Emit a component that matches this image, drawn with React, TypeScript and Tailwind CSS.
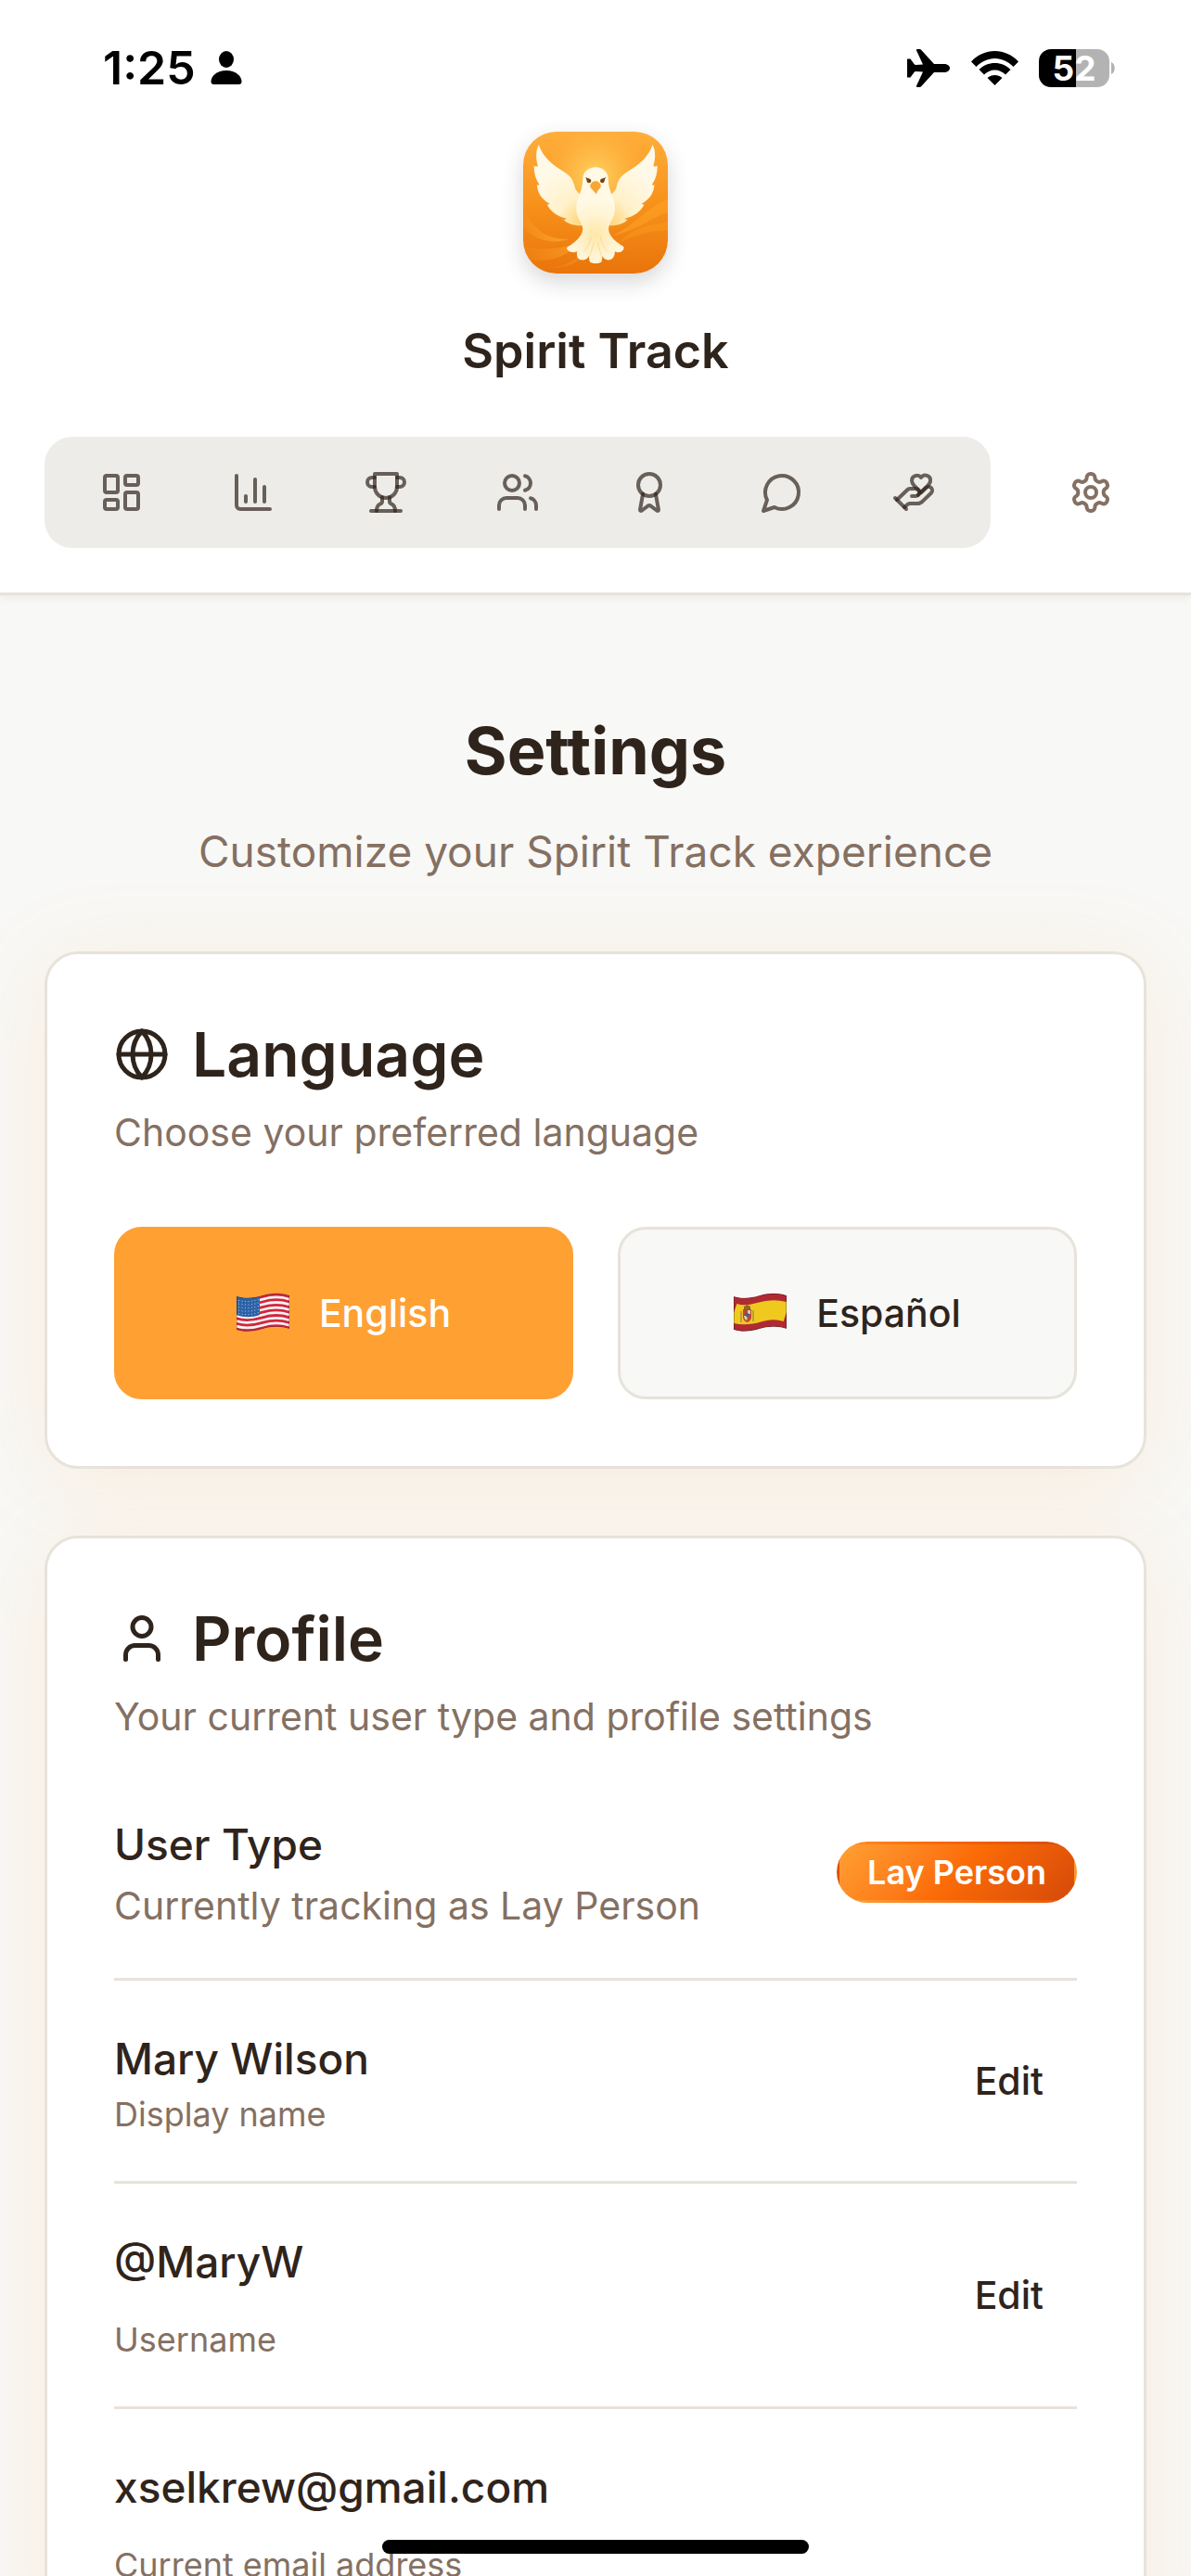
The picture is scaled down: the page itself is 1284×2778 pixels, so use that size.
import { useState } from "react";
import type { ReactNode } from "react";
import { Globe, LayoutDashboard, User } from "lucide-react";
import clsx from "clsx";

type Language = "en" | "es";

const StrokeIcon = ({ children }: { children: ReactNode }) => (
  <svg
    viewBox="0 0 24 24"
    fill="none"
    stroke="currentColor"
    strokeWidth={2}
    strokeLinecap="round"
    strokeLinejoin="round"
    className="size-12"
    aria-hidden="true"
  >
    {children}
  </svg>
);

const navItems: { label: string; icon: ReactNode }[] = [
  { label: "Dashboard", icon: <LayoutDashboard className="size-12" /> },
  {
    label: "Statistics",
    icon: (
      <StrokeIcon>
        <path d="M3 3v16a2 2 0 0 0 2 2h16" />
        <path d="M18 17V9" />
        <path d="M13 17V5" />
        <path d="M8 17v-3" />
      </StrokeIcon>
    ),
  },
  {
    label: "Goals",
    icon: (
      <StrokeIcon>
        <path d="M6 9H4.5a2.5 2.5 0 0 1 0-5H6" />
        <path d="M18 9h1.5a2.5 2.5 0 0 0 0-5H18" />
        <path d="M4 22h16" />
        <path d="M10 14.66V17c0 .55-.47.98-.97 1.21C7.85 18.75 7 20.24 7 22" />
        <path d="M14 14.66V17c0 .55.47.98.97 1.21C16.15 18.75 17 20.24 17 22" />
        <path d="M18 2H6v7a6 6 0 0 0 12 0V2Z" />
      </StrokeIcon>
    ),
  },
  {
    label: "Friends",
    icon: (
      <StrokeIcon>
        <path d="M16 21v-2a4 4 0 0 0-4-4H6a4 4 0 0 0-4 4v2" />
        <circle cx="9" cy="7" r="4" />
        <path d="M22 21v-2a4 4 0 0 0-3-3.87" />
        <path d="M16 3.13a4 4 0 0 1 0 7.75" />
      </StrokeIcon>
    ),
  },
  {
    label: "Achievements",
    icon: (
      <StrokeIcon>
        <path d="m15.477 12.89 1.515 8.526a.5.5 0 0 1-.81.47l-3.58-2.687a1 1 0 0 0-1.197 0l-3.586 2.686a.5.5 0 0 1-.81-.469l1.514-8.526" />
        <circle cx="12" cy="8" r="6" />
      </StrokeIcon>
    ),
  },
  {
    label: "Messages",
    icon: (
      <StrokeIcon>
        <path d="M7.9 20A9 9 0 1 0 4 16.1L2 22Z" />
      </StrokeIcon>
    ),
  },
  {
    label: "Prayer",
    icon: (
      <StrokeIcon>
        <path d="M11 14h2a2 2 0 1 0 0-4h-3c-.6 0-1.1.2-1.4.6L3 16" />
        <path d="m7 20 1.6-1.4c.3-.4.8-.6 1.4-.6h4c1.1 0 2.1-.4 2.8-1.2l4.6-4.4a2 2 0 0 0-2.75-2.91l-4.2 3.9" />
        <path d="m2 15 6 6" />
        <path d="M19.5 8.5c.7-.7 1.5-1.6 1.5-2.7A2.73 2.73 0 0 0 16 4a2.78 2.78 0 0 0-5 1.8c0 1.2.8 2 1.5 2.8L16 12Z" />
      </StrokeIcon>
    ),
  },
];

const StatusBar = () => (
  <div className="flex h-[142px] items-start justify-between pt-[42px] pl-[111px] pr-[82px] text-black">
    <div className="flex h-[62px] items-center gap-4">
      <span className="text-[50px] leading-[62px] font-semibold">1:25</span>
      <svg viewBox="0 0 34 36" className="h-9 w-[34px]" aria-hidden="true">
        <ellipse cx="17" cy="9" rx="8" ry="9" />
        <path d="M17 21c10 0 16.500 6 16.500 12 0 2-1 3-3 3h-27c-2 0-3-1-3-3 0-6 6.500-12 16.500-12Z" />
      </svg>
    </div>
    <div className="flex h-[62px] items-center">
      <svg viewBox="0 0 46 41" className="h-[41px] w-[46px]" aria-hidden="true">
        <path d="M0 10.500h3.500l4 5.500q.5 1 2 1l7.500-.5L10 1.500C9.700.6 10 0 11 0h2.500q1 0 1.600.7L29 16h11c4 0 6 2.500 6 4.500S44 25 40 25H29L15.100 40.300q-.6.7-1.600.7H11c-1 0-1.300-.6-1-1.500l7-15-7.500-.5q-1.500 0-2 1L3.500 30.500H0Z" />
      </svg>
      <svg
        viewBox="0 0 51 37"
        className="ml-[23px] h-[37px] w-[51px]"
        aria-hidden="true"
      >
        <path d="M0 11.500C7 4 16 0 25.500 0S44 4 51 11.500l-5.500 5.500C40 11.500 33 8 25.500 8S11 11.500 5.500 17Z" />
        <path d="M8.500 20C13 15.500 19 13 25.500 13s12.500 2.500 17 7L37 25.500C34 22.500 30 20.500 25.500 20.500S17 22.500 14 25.500Z" />
        <path d="M17.500 29c4.500-4 11.500-4 16 0l-8 8Z" />
      </svg>
      <div className="ml-[22px] flex h-[41px] w-[76px] items-center justify-center rounded-[13px] bg-linear-to-r from-black from-52% to-[#b3b3b3] to-52% text-[37px] leading-[41px] font-bold text-white">
        52
      </div>
      <svg viewBox="0 0 4 13" className="ml-0.5 h-[13px] w-1" aria-hidden="true">
        <path d="M0 0c5 2 5 11 0 13Z" fill="#b3b3b3" />
      </svg>
    </div>
  </div>
);

const DoveWing = () => (
  <path
    d="M491 107C501 125 502 150 494 176C499 179 504 178 507 175C507 200 501 221 489 237C492 239 495 239 497 237C495 265 482 284 455 299C459 301 462 301 464 300C455 322 431 340 400 347C404 350 408 350 411 349C398 364 376 371 345 369L345 275C360 268 372 255 374 244C379 222 388 209 408 196C447 172 479 147 491 107Z"
    fill="url(#wing)"
  />
);

const Logo = () => (
  <svg
    viewBox="70 65 471 460"
    preserveAspectRatio="none"
    className="h-[153px] w-[156px] rounded-[36px] shadow-[0_9px_24px_rgba(0,0,0,0.16)]"
    role="img"
    aria-label="Spirit Track"
  >
    <defs>
      <linearGradient id="sky" x1="0" y1="0" x2="0" y2="1">
        <stop offset="0" stopColor="#ffae3b" />
        <stop offset="0.5" stopColor="#f8921b" />
        <stop offset="1" stopColor="#e9740b" />
      </linearGradient>
      <radialGradient id="glow" cx="0.5" cy="0.32" r="0.4">
        <stop offset="0" stopColor="#ffd566" />
        <stop offset="0.5" stopColor="#ffc14d" stopOpacity="0.6" />
        <stop offset="1" stopColor="#ffae3b" stopOpacity="0" />
      </radialGradient>
      <linearGradient id="ray" x1="0" y1="0" x2="1" y2="0">
        <stop offset="0" stopColor="#ffab2e" stopOpacity="0.1" />
        <stop offset="0.8" stopColor="#ffab2e" stopOpacity="0.7" />
        <stop offset="1" stopColor="#ffab2e" stopOpacity="0" />
      </linearGradient>
      <radialGradient
        id="wing"
        gradientUnits="userSpaceOnUse"
        cx="350"
        cy="355"
        r="190"
      >
        <stop offset="0" stopColor="#ffd477" />
        <stop offset="0.4" stopColor="#fff1c9" />
        <stop offset="1" stopColor="#fff9e8" />
      </radialGradient>
      <radialGradient
        id="body"
        gradientUnits="userSpaceOnUse"
        cx="306"
        cy="400"
        r="120"
      >
        <stop offset="0" stopColor="#ffe7a8" />
        <stop offset="0.6" stopColor="#fff4d5" />
        <stop offset="1" stopColor="#fff9e6" />
      </radialGradient>
    </defs>
    <rect x="70" y="65" width="471" height="460" fill="url(#sky)" />
    <rect x="70" y="65" width="471" height="460" fill="url(#glow)" />
    <path
      d="M76 326C105 385 160 422 228 411C175 432 105 420 70 375Z"
      fill="url(#ray)"
    />
    <path
      d="M70 434C130 455 190 445 250 425C225 465 150 497 70 476Z"
      fill="url(#ray)"
      opacity="0.6"
    />
    <path
      d="M150 508C200 500 235 485 262 460C255 490 215 507 150 508Z"
      fill="url(#ray)"
      opacity="0.4"
    />
    <path
      d="M350 405C430 375 470 310 541 285V325C480 350 440 385 350 405Z"
      fill="#ffa526"
      opacity="0.5"
    />
    <path
      d="M375 430C430 375 480 365 541 360V385C480 385 430 400 375 430Z"
      fill="#ffa526"
      opacity="0.3"
    />
    <DoveWing />
    <g transform="matrix(-1 0 0 1 612 0)">
      <DoveWing />
    </g>
    <path
      d="M306 180C328 180 347 195 347 218C347 262 369 275 369 315C369 345 349 360 348 380C348 402 372 424 396 437C402 442 393 456 382 456C376 457 371 455 368 453C370 464 363 481 350 481C340 482 333 478 328 468C327 480 326 486 324 488C314 493 298 493 288 488C286 486 285 480 284 468C279 478 272 482 262 481C249 481 242 470 246 453C241 455 236 457 230 456C219 456 208 446 214 439C240 424 264 402 264 380C263 360 243 345 243 315C243 275 264 262 264 218C264 195 284 180 306 180Z"
      fill="url(#body)"
    />
    <path
      d="M268 454Q288 430 292 404M344 454Q324 430 320 404M287 470Q293 445 300 425M325 470Q319 445 312 425"
      fill="none"
      stroke="#f6bf5f"
      strokeWidth="2"
      opacity="0.6"
    />
    <path
      d="M273 212C281 217 288 215 291 222C293 229 286 233 280 230C276 226 277 219 273 212Z"
      fill="#7a4012"
    />
    <path
      d="M339 212C331 217 324 215 321 222C319 229 326 233 332 230C336 226 335 219 339 212Z"
      fill="#7a4012"
    />
    <path
      d="M306 225C319 226 327 238 321 247C316 253 310 259 308 268C302 260 295 254 290 247C285 238 293 226 306 225Z"
      fill="#f6a733"
    />
  </svg>
);

const flagWave = "c9 3 18 2 28 -1s20 -3 29 0";
const flagOutline =
  "M0 4c9 3 18 2 28 -1s20 -3 29 0v36c-9 -3 -19 -3 -29 0s-19 4 -28 1Z";

const UsFlag = () => (
  <svg viewBox="0 0 57 44" className="h-11 w-[57px]" aria-hidden="true">
    <clipPath id="us-shape">
      <path d={flagOutline} />
    </clipPath>
    <g clipPath="url(#us-shape)">
      <path d={flagOutline} fill="#f7f3f4" />
      {[0, 1, 2, 3, 4, 5, 6].map((stripe) => (
        <path
          key={stripe}
          d={`M0 ${5.4 + stripe * 5.6}${flagWave}`}
          fill="none"
          stroke="#d3263b"
          strokeWidth="2.8"
        />
      ))}
      <path d="M0 3c9 4 18 3 25 1v20c-8 3 -17 3 -25 0Z" fill="#2c62a6" />
      {[0, 1, 2, 3, 4].map((row) => (
        <path
          key={row}
          d={`M2 ${8.5 + row * 3.5}c8 2 15 1 22 -1`}
          fill="none"
          stroke="#b7cfec"
          strokeWidth="1"
          strokeDasharray="1 2.500"
        />
      ))}
      <path d={flagOutline} fill="none" stroke="#00000055" strokeWidth="1.500" />
    </g>
  </svg>
);

const SpainFlag = () => (
  <svg viewBox="0 0 57 44" className="h-11 w-[57px]" aria-hidden="true">
    <clipPath id="es-shape">
      <path d={flagOutline} />
    </clipPath>
    <g clipPath="url(#es-shape)">
      <path d={flagOutline} fill="#b02a33" />
      <path
        d={`M0 22${flagWave}`}
        fill="none"
        stroke="#f0c91f"
        strokeWidth="21"
      />
      <path d="M10 18h9v9q-1 4 -4.500 5q-3.500 -1 -4.500 -5Z" fill="#b7472d" />
      <path d="M11 18v-3l3.500 -2l3.500 2v3Z" fill="#8d6a1c" />
      <path d="M15 19v4h3v-4ZM11 25h3.500v5q-3 -1 -3.500 -4Z" fill="#dcc9b4" />
      <circle cx="14.500" cy="24" r="2" fill="#3b5d9b" />
      <path d="M8 20v12M21 19v12" stroke="#b08a4c" strokeWidth="1.500" />
      <path d={flagOutline} fill="none" stroke="#00000055" strokeWidth="1.500" />
    </g>
  </svg>
);

const Header = () => (
  <header className="relative border-b-[3px] border-[#e7e3da] bg-white pb-12 shadow-[0_3px_9px_rgba(0,0,0,0.06)]">
    <StatusBar />
    <div className="flex flex-col items-center gap-12">
      <Logo />
      <span className="text-[52px] leading-[72px] font-semibold">
        Spirit Track
      </span>
    </div>
    <div className="mt-14 flex items-center gap-12 px-12">
      <nav className="grid h-[120px] flex-1 grid-cols-7 rounded-[30px] bg-[#edece8] p-3 text-[#2f241c]/70">
        {navItems.map((item) => (
          <button
            key={item.label}
            type="button"
            aria-label={item.label}
            className="flex items-center justify-center"
          >
            {item.icon}
          </button>
        ))}
      </nav>
      <button
        type="button"
        aria-label="Settings"
        className="flex size-[120px] items-center justify-center text-[#857062]"
      >
        <StrokeIcon>
          <path d="M12.220 2h-.44a2 2 0 0 0-2 2v.18a2 2 0 0 1-1 1.730l-.43.25a2 2 0 0 1-2 0l-.15-.08a2 2 0 0 0-2.730.730l-.22.38a2 2 0 0 0 .730 2.730l.15.1a2 2 0 0 1 1 1.720v.51a2 2 0 0 1-1 1.740l-.15.09a2 2 0 0 0-.730 2.730l.22.38a2 2 0 0 0 2.730.730l.15-.08a2 2 0 0 1 2 0l.43.25a2 2 0 0 1 1 1.730V20a2 2 0 0 0 2 2h.44a2 2 0 0 0 2-2v-.18a2 2 0 0 1 1-1.730l.43-.25a2 2 0 0 1 2 0l.15.08a2 2 0 0 0 2.730-.730l.22-.39a2 2 0 0 0-.730-2.730l-.15-.08a2 2 0 0 1-1-1.740v-.5a2 2 0 0 1 1-1.740l.15-.09a2 2 0 0 0 .730-2.730l-.22-.38a2 2 0 0 0-2.730-.730l-.15.08a2 2 0 0 1-2 0l-.43-.25a2 2 0 0 1-1-1.730V4a2 2 0 0 0-2-2z" />
          <circle cx="12" cy="12" r="3" />
        </StrokeIcon>
      </button>
    </div>
  </header>
);

interface CardProps {
  icon: ReactNode;
  title: string;
  description: string;
  children: ReactNode;
}

const Card = ({ icon, title, description, children }: CardProps) => (
  <section className="rounded-[36px] border-[3px] border-[#e7e3da] bg-white p-[72px] shadow-[0_12px_96px_rgba(255,160,51,0.13)]">
    <h2 className="flex items-center gap-6 text-[66px] leading-[72px] font-semibold">
      {icon}
      {title}
    </h2>
    <p className="mt-[18px] mb-[72px] text-[41px] leading-[60px] text-[#857062]">
      {description}
    </p>
    {children}
  </section>
);

const EditButton = ({ field }: { field: string }) => (
  <button
    type="button"
    aria-label={`Edit ${field}`}
    className="px-9 text-[41px] leading-[60px] font-medium"
  >
    Edit
  </button>
);

const rowClass =
  "flex items-center justify-between border-b-[3px] border-[#e7e3da] py-12";
const valueClass = "text-[46px] leading-[72px] font-medium";
const hintClass = "text-[36px] leading-[48px] text-[#857062]";

export default function App() {
  const [language, setLanguage] = useState<Language>("en");

  const languages: { id: Language; name: string; flag: ReactNode }[] = [
    { id: "en", name: "English", flag: <UsFlag /> },
    { id: "es", name: "Español", flag: <SpainFlag /> },
  ];

  return (
    <div className="relative h-screen overflow-hidden bg-[#f8f8f6] font-[Inter,sans-serif] text-[#2f241c]">
      <Header />
      <main className="px-12 pt-[120px] pb-12">
        <div className="mb-[72px] text-center">
          <h1 className="text-[70px] leading-[96px] font-bold">Settings</h1>
          <p className="mt-6 text-[46px] leading-[72px] text-[#857062]">
            Customize your Spirit Track experience
          </p>
        </div>

        <div className="space-y-[72px]">
          <Card
            icon={<Globe className="size-[60px]" />}
            title="Language"
            description="Choose your preferred language"
          >
            <div className="grid grid-cols-2 gap-12">
              {languages.map((item) => (
                <button
                  key={item.id}
                  type="button"
                  aria-pressed={language === item.id}
                  onClick={() => setLanguage(item.id)}
                  className={clsx(
                    "flex h-[186px] items-center justify-center gap-8 rounded-[30px] border-[3px] text-[41px] leading-[60px] font-medium",
                    language === item.id
                      ? "border-[#ffa033] bg-[#ffa033] text-white"
                      : "border-[#e7e3da] bg-[#f8f8f6]"
                  )}
                >
                  {item.flag}
                  {item.name}
                </button>
              ))}
            </div>
          </Card>

          <Card
            icon={<User className="size-[60px]" />}
            title="Profile"
            description="Your current user type and profile settings"
          >
            <div className="flex items-center justify-between border-b-[3px] border-[#e7e3da] pb-12">
              <div>
                <p className={valueClass}>User Type</p>
                <p className="text-[41px] leading-[60px] text-[#857062]">
                  Currently tracking as Lay Person
                </p>
              </div>
              <span className="rounded-full border-[3px] border-transparent bg-linear-135 from-[#ffa033] via-[#fb6b06] to-[#d6490a] px-[30px] py-1.5 text-[36px] leading-[48px] font-semibold text-white">
                Lay Person
              </span>
            </div>
            <div className={rowClass}>
              <div>
                <p className={valueClass}>Mary Wilson</p>
                <p className={hintClass}>Display name</p>
              </div>
              <EditButton field="display name" />
            </div>
            <div className={rowClass}>
              <div className="space-y-6">
                <p className={valueClass}>@MaryW</p>
                <p className={hintClass}>Username</p>
              </div>
              <EditButton field="username" />
            </div>
            <div className="space-y-6 pt-12">
              <p className={valueClass}>xselkrew@gmail.com</p>
              <p className={hintClass}>Current email address</p>
            </div>
          </Card>
        </div>
      </main>

      {/* Home indicator */}
      <div className="absolute inset-x-0 bottom-6 flex justify-center">
        <div className="h-[15px] w-[460px] rounded-full bg-black" />
      </div>
    </div>
  );
}
